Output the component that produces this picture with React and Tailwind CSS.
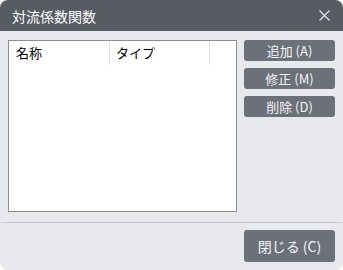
export default function App() {
  const font = { fontFamily: '"Noto Sans CJK JP", "Noto Sans", sans-serif' };
  return (
    <div className="w-[343px] h-[270px] bg-white" style={font}>
      <div className="w-[343px] h-[270px] rounded-[8px] overflow-hidden bg-[#e8e9ec] flex flex-col">
        <div className="h-[31px] bg-[#575c63] flex items-center justify-between pl-[12px] pr-[12px] shrink-0">
          <span className="text-white text-[14px] leading-none">対流係数関数</span>
          <svg width="11" height="11" viewBox="0 0 11 11" className="mr-[1px]">
            <path d="M0.5 0.5 L10.5 10.5 M10.5 0.5 L0.5 10.5" stroke="#e8e9ec" strokeWidth="1.1" />
          </svg>
        </div>
        <div className="flex pl-[8px] pr-[8px] pt-[9px] gap-[7px]">
          <div className="w-[229px] h-[172px] bg-white border border-[#8a8d93] shrink-0">
            <div className="flex h-[24px] text-[13px] text-black">
              <div className="w-[101px] pl-[7px] flex items-center border-r border-[#e2e2e2]">名称</div>
              <div className="w-[100px] pl-[6px] flex items-center border-r border-[#e2e2e2]">タイプ</div>
            </div>
          </div>
          <div className="flex flex-col gap-[7px]">
            {["追加 (A)", "修正 (M)", "削除 (D)"].map((t) => (
              <div key={t} className="w-[91px] h-[21px] rounded-[3px] bg-[#6b7079] text-[#f4f5f6] text-[13px] flex items-center justify-center leading-none">
                {t}
              </div>
            ))}
          </div>
        </div>
        <div className="mt-[10px] h-px bg-[#c5c9cd] mx-[1px]" />
        <div className="flex justify-end pr-[8px] pt-[7px]">
          <div className="w-[91px] h-[32px] rounded-[3px] bg-[#6b7079] text-[#f4f5f6] text-[14px] flex items-center justify-center leading-none">
            閉じる (C)
          </div>
        </div>
      </div>
    </div>
  );
}
